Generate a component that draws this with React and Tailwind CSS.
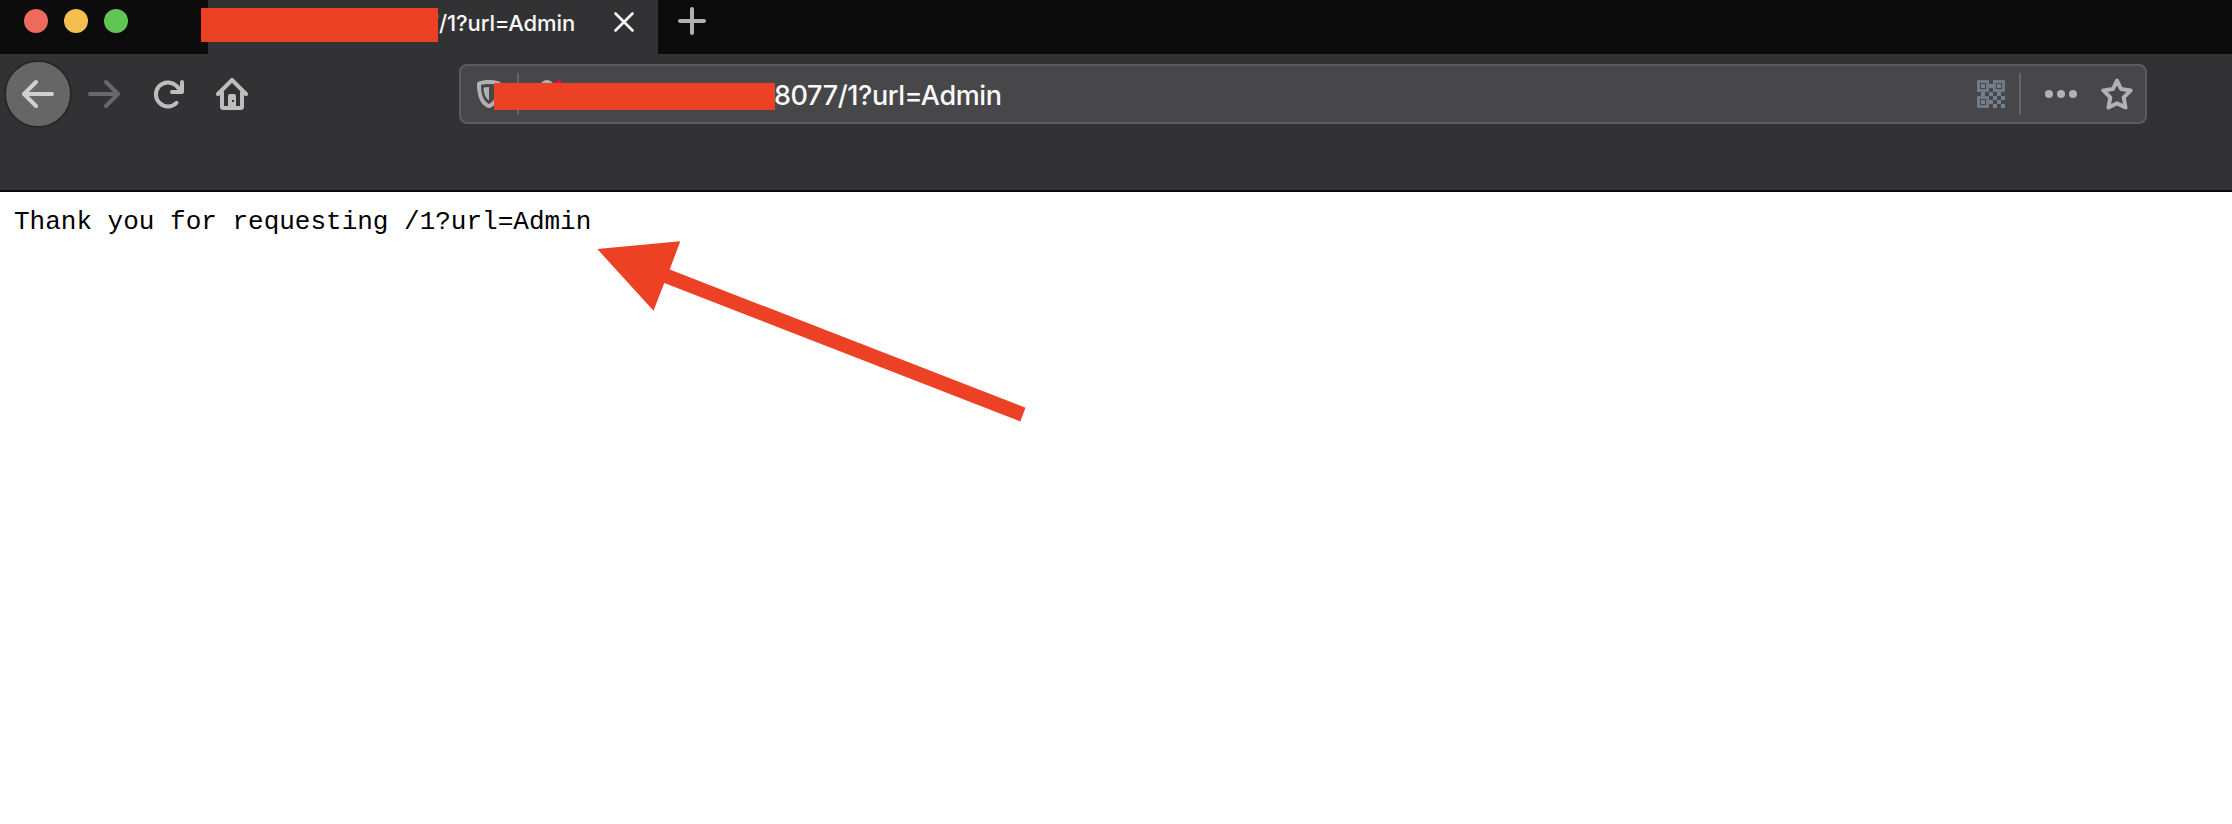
const RINGS = [[0, 0], [16, 0], [0, 16]];
const CELLS = [
  [12, 4], [4, 12], [20, 12], [12, 12], [16, 16], [24, 16], [12, 20], [20, 20], [16, 24], [24, 24],
];

function TabStrip() {
  return (
    <div className="flex h-[54px] bg-[#0c0c0d]">
      <div className="flex h-[42px] w-[208px] shrink-0 items-center gap-4 pl-6">
        <span className="size-6 rounded-full bg-[#ed6a5e]" />
        <span className="size-6 rounded-full bg-[#f5bf4f]" />
        <span className="size-6 rounded-full bg-[#61c554]" />
      </div>
      <div className="relative flex w-[450px] shrink-0 bg-[#323234]">
        <div className="w-[367px] shrink-0 overflow-hidden pt-[9px] text-right font-[Inter,sans-serif] text-[22px] leading-7 font-medium tracking-[-0.12px] whitespace-nowrap text-[#f9f9fa]">
          7/1?url=Admin
        </div>
        <svg className="mt-3 ml-[39px] size-5" viewBox="0 0 20 20" fill="none" stroke="#f9f9fa" strokeWidth="2.6" strokeLinecap="round">
          <path d="M1.500 1.500l17 17M18.500 1.500l-17 17" />
        </svg>
        <span className="absolute top-2 left-[-7px] h-[34px] w-[237px] bg-[#ec4125]" />
      </div>
      <svg className="mt-[7px] ml-5 size-7" viewBox="0 0 28 28" fill="none" stroke="#b1b1b3" strokeWidth="4" strokeLinecap="round">
        <path d="M14 2v24M2 14h24" />
      </svg>
    </div>
  );
}

function AddressBar() {
  return (
    <div className="relative ml-[211px] flex h-[60px] w-[1688px] shrink-0 rounded-lg border-2 border-[#5c5c5e] bg-[#474749]">
      <svg className="mt-3 ml-4 size-8 shrink-0" viewBox="0 0 32 32">
        <path d="M0 5.500Q0 4.200 1.200 3.700C4.500 2.500 8 2 12 2s7.500.5 10.800 1.700Q24 4.200 24 5.500C24 17 21.500 26 13.500 29.700q-1.500.6-3 0C2.500 26 0 17 0 5.500z" fill="#b1b1b3" />
        <path d="M4 7c2.500-.7 5-1 8-1s5.500.3 8 1c0 9.500-2.200 16-8 19C6.200 23 4 16.500 4 7z" fill="#474749" />
        <path d="M6.500 9.600C8.200 9.200 10 9 12 9v13.600C8.200 20 6.700 15.500 6.500 9.600z" fill="#b1b1b3" />
      </svg>
      <span className="mt-[7px] ml-2 h-[42px] w-0.5 bg-[#5f6670]" />
      <svg className="mt-3.5 ml-5 size-8 shrink-0" viewBox="0 0 32 32">
        <circle cx="8" cy="7" r="7" fill="#b1b1b3" />
        <path d="M14 8L20 2" stroke="#ff0039" strokeWidth="4" strokeLinecap="round" />
      </svg>
      <div className="ml-[203px] w-[1203px] shrink-0 pt-1.5 font-[Inter,sans-serif] text-[27px] leading-[48px] font-medium tracking-[-0.4px] whitespace-nowrap text-[#f9f9fa]">
        8077/1?url=Admin
      </div>
      <svg className="mt-3.5 size-7 shrink-0" viewBox="0 0 28 28" fill="#74808b">
        {RINGS.map(([x, y]) => (
          <g key={`${x}-${y}`}>
            <rect x={x + 1.5} y={y + 1.5} width="9" height="9" fill="none" stroke="#6f7a85" strokeWidth="3" />
            <rect x={x + 4} y={y + 4} width="4" height="4" />
          </g>
        ))}
        {CELLS.map(([x, y]) => (
          <rect key={`${x}-${y}`} x={x} y={y} width="4" height="4" />
        ))}
      </svg>
      <span className="mt-[7px] ml-3.5 h-[42px] w-0.5 bg-[#5f6670]" />
      <svg className="mt-3 ml-6 h-8 w-8 shrink-0" viewBox="0 0 32 32" fill="#b1b1b3">
        <circle cx="4" cy="16" r="4" />
        <circle cx="16" cy="16" r="4" />
        <circle cx="28" cy="16" r="4" />
      </svg>
      <svg className="mt-3 ml-6 size-8 shrink-0" viewBox="0 0 32 32" fill="none" stroke="#b1b1b3" strokeWidth="4" strokeLinejoin="round">
        <path d="M16 2.500l4 8.500 9.700 1.400-7 6.900 1.800 10.200L16 25.200l-8.500 4.300 1.800-10.200-7-6.900L12 11z" />
      </svg>
      <span className="absolute top-[17px] left-[33px] h-[27px] w-[281px] bg-[#ec4125]" />
    </div>
  );
}

function Toolbar() {
  return (
    <div className="flex h-[138px] border-b-2 border-[#0c0c0d] bg-[#323234] pt-[10px]">
      <div className="mt-[-4px] ml-1 flex size-[68px] shrink-0 items-center justify-center rounded-full border-2 border-[#272728] bg-[#666667]">
        <svg className="size-8" viewBox="0 0 32 32" fill="none" stroke="#d0d0d1" strokeWidth="4" strokeLinecap="round" strokeLinejoin="round">
          <path d="M30 16H2M14 4L2 16l12 12" />
        </svg>
      </div>
      <svg className="mt-3.5 ml-4 size-8 shrink-0" viewBox="0 0 32 32" fill="none" stroke="#68686a" strokeWidth="4" strokeLinecap="round" strokeLinejoin="round">
        <path d="M2 16h28M18 4l12 12-12 12" />
      </svg>
      <svg className="mt-3.5 ml-8 size-8 shrink-0" viewBox="0 0 32 32" fill="none" stroke="#bdbdbe" strokeWidth="4" strokeLinecap="round" strokeLinejoin="round">
        <path d="M24.500 24.800A12 12 0 1 1 24 7.500L29 12.500" />
        <path d="M30 4v10H20" />
      </svg>
      <svg className="mt-3.5 ml-8 size-8 shrink-0" viewBox="0 0 32 32" fill="none" stroke="#bdbdbe" strokeWidth="4" strokeLinecap="round" strokeLinejoin="round">
        <path d="M2 16L16 2l14 14M6 14v14.500q0 1.500 1.500 1.500h17q1.500 0 1.500-1.500V14" />
        <path d="M12 30V18q0-2 2-2h4q2 0 2 2v12z" fill="#bdbdbe" stroke="none" />
        <path d="M16 22h2v2h-2z" fill="#323234" stroke="none" />
      </svg>
      <AddressBar />
    </div>
  );
}

export default function App() {
  return (
    <div className="relative h-[824px] w-[2232px] overflow-hidden bg-white">
      <TabStrip />
      <Toolbar />
      <pre className="pt-[13px] pl-[14px] font-['Liberation_Mono',monospace] text-[26px] leading-[34px] text-black">
        Thank you for requesting /1?url=Admin
      </pre>
      <svg className="absolute top-[240px] left-[596px] h-[184px] w-[432px]" viewBox="596 240 432 184">
        <path d="M597.300 249L680.300 241.300L669.700 269.500L1025.500 407.700L1020.300 421.500L664.300 283L653.500 310.800z" fill="#ec4125" />
      </svg>
    </div>
  );
}
